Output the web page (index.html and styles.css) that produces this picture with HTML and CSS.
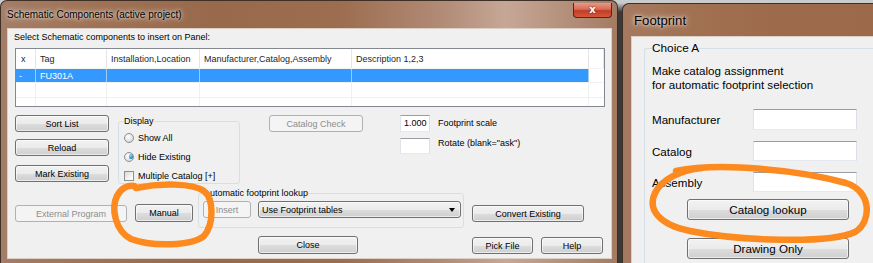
FILE: index.html
```html
<!DOCTYPE html>
<html>
<head>
<meta charset="utf-8">
<title>Schematic Components</title>
<link rel="stylesheet" href="styles.css">
</head>
<body>
<div class="desk">
  <div class="win win-left">
    <div class="titlebar">
      <span class="title">Schematic Components (active project)</span>
      <span class="close">x</span>
    </div>
    <div class="client client-left">
      <div class="lbl-select">Select Schematic components to insert on Panel:</div>
      <div class="list">
        <div class="lrow head">
          <div class="c c1">x</div><div class="c c2">Tag</div><div class="c c3">Installation,Location</div><div class="c c4">Manufacturer,Catalog,Assembly</div><div class="c c5">Description 1,2,3</div><div class="c c6"></div>
        </div>
        <div class="lrow sel">
          <div class="c c1">-</div><div class="c c2">FU301A</div><div class="c c3"></div><div class="c c4"></div><div class="c c5"></div><div class="c c6"></div>
        </div>
        <div class="lrow empty">
          <div class="c c1"></div><div class="c c2"></div><div class="c c3"></div><div class="c c4"></div><div class="c c5"></div><div class="c c6"></div>
        </div>
        <div class="lrow empty">
          <div class="c c1"></div><div class="c c2"></div><div class="c c3"></div><div class="c c4"></div><div class="c c5"></div><div class="c c6"></div>
        </div>
      </div>

      <div class="row1">
        <div class="col-btns">
          <div class="btn b-side">Sort List</div>
          <div class="btn b-side">Reload</div>
          <div class="btn b-side b-mark">Mark Existing</div>
        </div>
        <fieldset class="grp grp-display">
          <legend>Display</legend>
          <div class="opt"><span class="radio"></span><span>Show All</span></div>
          <div class="opt"><span class="radio on"><span class="dot"></span></span><span>Hide Existing</span></div>
          <div class="opt"><span class="check"></span><span>Multiple Catalog [+]</span></div>
        </fieldset>
        <div class="btn dis b-catcheck">Catalog Check</div>
        <div class="scale">
          <div class="frow"><div class="tb tb1">1.000</div><span class="flbl">Footprint scale</span></div>
          <div class="frow frow2"><div class="tb tb2"></div><span class="flbl">Rotate (blank="ask")</span></div>
        </div>
      </div>

      <div class="row2">
        <div class="btn dis b-ext">External Program</div>
        <div class="btn b-manual">Manual</div>
        <fieldset class="grp grp-auto">
          <legend>Automatic footprint lookup</legend>
          <div class="auto-inner">
            <div class="btn dis b-insert">Insert</div>
            <div class="btn combo"><span class="combo-text">Use Footprint tables</span><span class="arrow"></span></div>
          </div>
        </fieldset>
        <div class="btn b-convert">Convert Existing</div>
      </div>

      <div class="row3">
        <div class="btn b-close">Close</div>
        <div class="btn b-pick">Pick File</div>
        <div class="btn b-help">Help</div>
      </div>
    </div>
  </div>

  <div class="win win-right">
    <div class="titlebar titlebar-r">
      <span class="title title-r">Footprint</span>
    </div>
    <div class="client client-right">
      <fieldset class="grp grp-choice">
        <legend>Choice A</legend>
        <div class="desc">Make catalog assignment<br>for automatic footprint selection</div>
        <div class="frow-r first"><span class="rlbl">Manufacturer</span><div class="tb tb-r tb-r1"></div></div>
        <div class="frow-r"><span class="rlbl">Catalog</span><div class="tb tb-r"></div></div>
        <div class="frow-r"><span class="rlbl">Assembly</span><div class="tb tb-r"></div></div>
        <div class="btn btn-r b-lookup">Catalog lookup</div>
        <div class="btn btn-r b-drawing">Drawing Only</div>
      </fieldset>
    </div>
  </div>
</div>

<svg class="marks" width="873" height="263" viewBox="0 0 873 263">
  <path d="M 136 188 C 160 183, 192 183, 204 191 C 214 199, 214 224, 204 236 C 192 246, 152 247, 131 239 C 115 231, 111 208, 117 196 C 121 188, 128 185, 134 186" />
  <path d="M 676 171 C 720 162, 800 170, 846 183 C 872 191, 872 222, 855 232 C 830 244, 740 241, 690 231 C 660 225, 647 210, 655 193 C 661 180, 680 170, 702 168" />
</svg>
</body>
</html>
```

FILE: styles.css
```css
* { box-sizing: border-box; }
html, body { margin: 0; padding: 0; }
body {
  width: 873px;
  height: 263px;
  overflow: hidden;
  position: relative;
  background: linear-gradient(#c9cccd 0, #c9cccd 3px, #3b3836 12px, #3b3836 100%);
  font-family: "Liberation Sans", Arial, sans-serif;
  color: #000;
}
.desk { display: flex; align-items: flex-start; height: 263px; overflow: hidden; }

.win {
  display: flex;
  flex-direction: column;
  border: 1px solid #3e2f27;
  border-bottom: none;
  border-radius: 7px 7px 0 0;
  flex-shrink: 0;
  overflow: hidden;
}
.win-left {
  width: 618px;
  height: 263px;
  padding: 0 5px 0 6px;
  background: linear-gradient(90deg, #a47d66 0%, #a07458 12%, #98694b 35%, #9c6d4f 55%, #b28c77 72%, #c6a796 82%, #b38f7a 92%, #a37b63 100%);
}
.titlebar { height: 27px; flex-shrink: 0; display: flex; align-items: flex-start; }
.title {
  font-size: 10px;
  line-height: 12px;
  padding-top: 8px;
  text-shadow: 0 0 6px rgba(255,255,255,0.9), 0 0 3px rgba(255,255,255,0.8);
}
.close {
  margin-left: auto;
  margin-top: 2px;
  width: 39px;
  height: 15px;
  border: 1px solid #5a2219;
  border-top: none;
  border-radius: 0 0 4px 4px;
  background: linear-gradient(#e79a86 0%, #d66a55 45%, #c43b24 55%, #d45a3c 100%);
  color: #fff;
  font: bold 10px/13px "DejaVu Sans", sans-serif;
  text-align: center;
  text-shadow: 0 0 2px #5a1a10;
}

.client {
  background: #f0f0f0;
  border: 1px solid #dccfc6;
  flex-shrink: 0;
}
.client-left {
  height: 231px;
  padding: 0 0 0 7px;
  display: flex;
  flex-direction: column;
  font-size: 9px;
}
.lbl-select { margin-top: 3px; line-height: 11px; margin-left: -1px; }

/* list view */
.list {
  margin-top: 5px;
  width: 590px;
  height: 59px;
  border: 1px solid #828790;
  background: #fff;
  overflow: hidden;
}
.lrow { display: flex; }
.c { flex-shrink: 0; padding-left: 4px; white-space: nowrap; overflow: hidden; }
.c1 { width: 20px; padding-left: 5px; }
.c2 { width: 71px; }
.c3 { width: 93px; }
.c4 { width: 152px; }
.c5 { width: 237px; }
.c6 { flex: 1; }
.head { height: 20px; border-bottom: 1px solid #f3f3f3; }
.head .c { border-right: 1px solid #e5e5e5; line-height: 20px; color: #1e1e1e; }
.head .c1 { padding-left: 5px; }
.sel { height: 14px; border-bottom: 1px solid #f0f0f0; }
.sel .c { background: #3399ff; color: #fff; line-height: 14px; border-right: 1px solid #9fcbf7; }
.sel .c1 { padding-left: 3px; }
.sel .c6 { background: #fff; border-right: none; }
.empty { height: 15px; border-bottom: 1px solid #f0f0f0; }
.empty .c { border-right: 1px solid #f0f0f0; }
.empty .c6 { border-right: none; }

/* buttons */
.btn {
  height: 17px;
  border: 1px solid #707070;
  border-radius: 3px;
  background: linear-gradient(#f2f2f2 0%, #ebebeb 50%, #dddddd 51%, #cfcfcf 100%);
  display: flex;
  align-items: center;
  justify-content: center;
  white-space: nowrap;
  flex-shrink: 0;
  box-shadow: inset 0 0 0 1px rgba(255,255,255,0.6);
}
.btn.dis {
  border-color: #adb2b5;
  background: #f4f4f4;
  color: #8d8d8d;
  box-shadow: none;
}

.row1 { display: flex; align-items: flex-start; margin-top: 8px; }
.col-btns { display: flex; flex-direction: column; width: 94px; }
.b-side { width: 94px; margin-bottom: 7px; }
.b-mark { margin-top: 2px; margin-bottom: 0; }

.grp {
  margin: 0;
  border: 1px solid #d5dfe5;
  border-radius: 3px;
  min-width: 0;
}
.grp legend { padding: 0; line-height: 11px; }
.grp-display {
  margin-left: 9px;
  margin-top: 1px;
  width: 122px;
  height: 68px;
  padding: 0 0 0 5px;
}
.opt { display: flex; align-items: center; height: 13px; margin-top: 6px; }
.opt:first-of-type { margin-top: 4px; }
.opt span:last-child { margin-left: 4px; }
.radio {
  width: 10px; height: 10px;
  border-radius: 50%;
  border: 1px solid #8a8f94;
  background: radial-gradient(circle at 40% 35%, #ffffff 0%, #e4e4e4 55%, #cfcfcf 100%);
  display: flex; align-items: center; justify-content: center;
  flex-shrink: 0;
}
.dot {
  width: 5px; height: 5px; border-radius: 50%;
  background: radial-gradient(circle at 40% 35%, #9ad8f5 0%, #2a8ac4 60%, #0e5a8a 100%);
}
.check {
  width: 10px; height: 10px;
  border: 1px solid #8e8f8f;
  background: linear-gradient(135deg, #d8d8d8 0%, #f4f4f4 60%, #ffffff 100%);
  flex-shrink: 0;
}

.b-catcheck { width: 94px; margin-left: 29px; }
.scale { margin-left: 37px; display: flex; flex-direction: column; }
.frow { display: flex; align-items: flex-start; }
.frow2 { margin-top: 6px; }
.tb { background: #fff; border: 1px solid #abadb3; border-top-color: #9a9ca3; border-left-color: #e2e3ea; border-right-color: #dbdfe6; border-bottom-color: #e3e9ef; }
.tb1 { width: 30px; height: 17px; line-height: 15px; padding-left: 3px; }
.tb2 { width: 30px; height: 16px; }
.flbl { margin-left: 8px; line-height: 11px; margin-top: 3px; }
.frow2 .flbl { margin-top: 0; }

.row2 { display: flex; align-items: flex-start; margin-top: 8px; }
.b-ext { width: 112px; margin-top: 13px; }
.b-manual { width: 58px; margin-left: 8px; margin-top: 12px; height: 18px; }
.grp-auto {
  margin-left: 5px;
  width: 266px;
  height: 40px;
  padding: 0 0 0 4px;
  margin-top: -4px;
}
.grp-auto legend { margin-left: 1px; }
.auto-inner { display: flex; margin-top: 2px; }
.b-insert { width: 48px; }
.combo { width: 203px; margin-left: 7px; justify-content: space-between; padding: 0 5px 0 3px; }
.arrow {
  width: 0; height: 0;
  border-left: 3.5px solid transparent;
  border-right: 3.5px solid transparent;
  border-top: 4px solid #000;
}
.b-convert { width: 112px; margin-left: 8px; margin-top: 13px; }

.row3 { display: flex; margin-top: 8px; }
.b-close { width: 100px; margin-left: 243px; height: 18px; }
.b-pick { width: 61px; margin-left: 114px; margin-top: 1px; }
.b-help { width: 62px; margin-left: 8px; margin-top: 1px; }

/* right window */
.win-right {
  width: 251px;
  height: 260px;
  margin-left: 4px;
  margin-top: 3px;
  padding: 0 0 0 8px;
  border-right: none;
  border-radius: 7px 0 0 0;
  background: linear-gradient(90deg, #a57a61 0%, #a27254 20%, #9d6b4c 60%, #9c6a4b 100%);
}
.titlebar-r { height: 32px; }
.title-r {
  font-size: 13.2px;
  line-height: 15px;
  padding-top: 9px;
  margin-left: 3px;
}
.client-right {
  flex: 1;
  padding: 0 0 0 12px;
  font-size: 11.6px;
  border-right: none;
  border-bottom: none;
  display: flex;
  flex-direction: column;
}
.grp-choice {
  margin-top: 4px;
  flex: 1;
  padding: 0 0 0 7px;
  border-right: none;
  border-bottom: none;
  border-radius: 3px 0 0 0;
}
.grp-choice legend { line-height: 14px; font-size: 11.8px; }
.desc { margin-top: 9px; line-height: 14px; }
.frow-r { display: flex; align-items: center; margin-top: 11px; height: 20px; }
.frow-r.first { margin-top: 17px; height: 21px; }
.rlbl { width: 101px; flex-shrink: 0; }
.tb-r { width: 104px; height: 20px; }
.tb-r1 { height: 21px; }
.btn-r { width: 162px; height: 21px; margin-left: 35px; font-size: 11.6px; }
.b-lookup { margin-top: 7px; }
.b-drawing { margin-top: 18px; }

/* annotations */
.marks {
  position: absolute;
  left: 0;
  top: 0;
  pointer-events: none;
}
.marks path {
  fill: none;
  stroke: #fc8a1e;
  stroke-width: 6.5;
  stroke-linecap: round;
  stroke-linejoin: round;
}
```
